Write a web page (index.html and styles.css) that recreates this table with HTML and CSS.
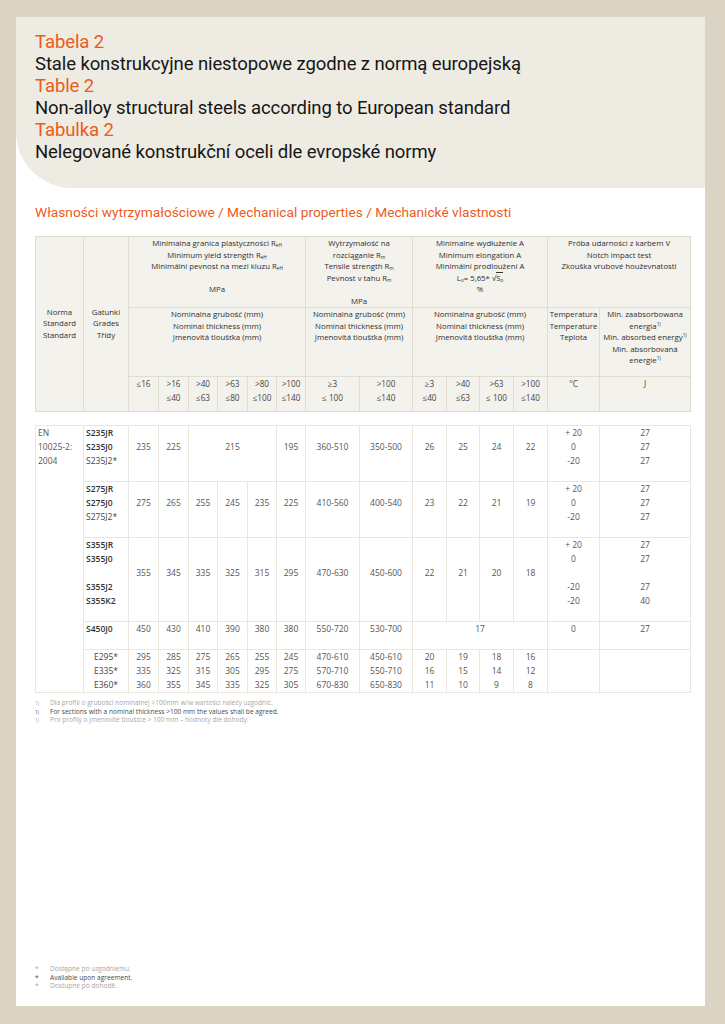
FILE: index.html
```html
<!DOCTYPE html>
<html lang="pl">
<head>
<meta charset="utf-8">
<title>Tabela 2</title>
<link rel="stylesheet" href="styles.css">
</head>
<body>
<div class="page">
  <div class="card">
    <header class="hero">
      <div class="orange">Tabela 2</div>
      <div>Stale konstrukcyjne niestopowe zgodne z normą europejską</div>
      <div class="orange">Table 2</div>
      <div>Non-alloy structural steels according to European standard</div>
      <div class="orange">Tabulka 2</div>
      <div>Nelegované konstrukční oceli dle evropské normy</div>
    </header>
    <section class="content">
      <h2 class="sect">Własności wytrzymałościowe / Mechanical properties / Mechanické vlastnosti</h2>
      <table class="thead-t">
        <colgroup>
          <col class="c48"><col class="c45"><col class="c30"><col class="c30"><col class="c29"><col class="c30"><col class="c29"><col class="c29"><col class="c54"><col class="c53"><col class="c34"><col class="c33"><col class="c34"><col class="c34"><col class="c52"><col class="c91">
        </colgroup>
        <tr class="h1">
          <td rowspan="3" class="mid">Norma<br>Standard<br>Standard</td>
          <td rowspan="3" class="mid">Gatunki<br>Grades<br>Třídy</td>
          <td colspan="6">Minimalna granica plastyczności R<sub>eH</sub><br>Minimum yield strength R<sub>eH</sub><br>Minimální pevnost na mezi kluzu R<sub>eH</sub><br><br>MPa</td>
          <td colspan="2">Wytrzymałość na<br>rozciąganie R<sub>m</sub><br>Tensile strength R<sub>m</sub><br>Pevnost v tahu R<sub>m</sub><br><br>MPa</td>
          <td colspan="4">Minimalne wydłużenie A<br>Minimum elongation A<br>Minimální prodloužení A<br>L<sub>o</sub>= 5,65* √<span class="ov">S<sub>o</sub></span><br>%</td>
          <td colspan="2">Próba udarności z karbem V<br>Notch impact test<br>Zkouška vrubové houževnatosti</td>
        </tr>
        <tr class="h2">
          <td colspan="6">Nominalna grubość (mm)<br>Nominal thickness (mm)<br>Jmenovitá tloušťka (mm)</td>
          <td colspan="2">Nominalna grubość (mm)<br>Nominal thickness (mm)<br>Jmenovitá tloušťka (mm)</td>
          <td colspan="4">Nominalna grubość (mm)<br>Nominal thickness (mm)<br>Jmenovitá tloušťka (mm)</td>
          <td>Temperatura<br>Temperature<br>Teplota</td>
          <td>Min. zaabsorbowana<br>energia<sup>1)</sup><br>Min. absorbed energy<sup>1)</sup><br>Min. absorbovaná<br>energie<sup>1)</sup></td>
        </tr>
        <tr class="h3">
          <td>≤16</td>
          <td>&gt;16<br>≤40</td>
          <td>&gt;40<br>≤63</td>
          <td>&gt;63<br>≤80</td>
          <td>&gt;80<br>≤100</td>
          <td>&gt;100<br>≤140</td>
          <td>≥3<br>≤ 100</td>
          <td>&gt;100<br>≤140</td>
          <td>≥3<br>≤40</td>
          <td>&gt;40<br>≤63</td>
          <td>&gt;63<br>≤ 100</td>
          <td>&gt;100<br>≤140</td>
          <td>°C</td>
          <td>J</td>
        </tr>
      </table>

      <table class="tbody-t">
        <colgroup>
          <col class="c48"><col class="c45"><col class="c30"><col class="c30"><col class="c29"><col class="c30"><col class="c29"><col class="c29"><col class="c54"><col class="c53"><col class="c34"><col class="c33"><col class="c34"><col class="c34"><col class="c52"><col class="c91">
        </colgroup>
        <tr class="pad">
          <td rowspan="5" class="std">EN<br>10025-2:<br>2004</td>
          <td class="grade"><b>S235JR</b><br><b>S235J0</b><br>S235J2*</td>
          <td>235</td><td>225</td><td colspan="3">215</td><td>195</td>
          <td>360-510</td><td>350-500</td>
          <td>26</td><td>25</td><td>24</td><td>22</td>
          <td>+ 20<br>0<br>-20</td>
          <td>27<br>27<br>27</td>
        </tr>
        <tr class="pad">
          <td class="grade"><b>S275JR</b><br><b>S275J0</b><br>S275J2*</td>
          <td>275</td><td>265</td><td>255</td><td>245</td><td>235</td><td>225</td>
          <td>410-560</td><td>400-540</td>
          <td>23</td><td>22</td><td>21</td><td>19</td>
          <td>+ 20<br>0<br>-20</td>
          <td>27<br>27<br>27</td>
        </tr>
        <tr class="pad">
          <td class="grade"><b>S355JR</b><br><b>S355J0</b><br><br><b>S355J2</b><br><b>S355K2</b></td>
          <td>355</td><td>345</td><td>335</td><td>325</td><td>315</td><td>295</td>
          <td>470-630</td><td>450-600</td>
          <td>22</td><td>21</td><td>20</td><td>18</td>
          <td>+ 20<br>0<br><br>-20<br>-20</td>
          <td>27<br>27<br><br>27<br>40</td>
        </tr>
        <tr class="pad">
          <td class="grade"><b>S450J0</b></td>
          <td>450</td><td>430</td><td>410</td><td>390</td><td>380</td><td>380</td>
          <td>550-720</td><td>530-700</td>
          <td colspan="4">17</td>
          <td>0</td>
          <td>27</td>
        </tr>
        <tr>
          <td class="grade egr">E295*<br>E335*<br>E360*</td>
          <td>295<br>335<br>360</td>
          <td>285<br>325<br>355</td>
          <td>275<br>315<br>345</td>
          <td>265<br>305<br>335</td>
          <td>255<br>295<br>325</td>
          <td>245<br>275<br>305</td>
          <td>470-610<br>570-710<br>670-830</td>
          <td>450-610<br>550-710<br>650-830</td>
          <td>20<br>16<br>11</td>
          <td>19<br>15<br>10</td>
          <td>18<br>14<br>9</td>
          <td>16<br>12<br>8</td>
          <td></td>
          <td></td>
        </tr>
      </table>

      <div class="notes">
        <div class="note light"><span class="mark">1)</span><span>Dla profili o grubości nominalnej &gt;100mm w/w wartości należy uzgodnić.</span></div>
        <div class="note dark"><span class="mark">1)</span><span>For sections with a nominal thickness &gt;100 mm the values shall be agreed.</span></div>
        <div class="note light"><span class="mark">1)</span><span>Pro profily o jmenovité tloušťce &gt; 100 mm – hodnoty dle dohody.</span></div>
      </div>

      <div class="notes bottom">
        <div class="note light"><span class="mark star">*</span><span>Dostępne po uzgodnieniu.</span></div>
        <div class="note dark"><span class="mark star">*</span><span>Available upon agreement.</span></div>
        <div class="note light"><span class="mark star">*</span><span>Dostupné po dohodě.</span></div>
      </div>
    </section>
  </div>
</div>
</body>
</html>
```

FILE: styles.css
```css
* { box-sizing: border-box; }
html, body { margin: 0; padding: 0; }
body {
  background: #dbd4c4;
  font-family: "Open Sans", "DejaVu Sans", sans-serif;
  color: #333;
}
.page { padding: 17px 20px 18px 16px; }
.card {
  background: #ffffff;
  height: 989px;
  display: flex;
  flex-direction: column;
}
.hero {
  background: #eeebe3;
  border-bottom-left-radius: 56px;
  padding: 14px 19px 25px;
  font-family: Roboto, "Liberation Sans", sans-serif;
  font-size: 18.5px;
  letter-spacing: -0.1px;
  line-height: 22px;
  color: #161616;
}
.orange { color: #ec5b1b; }
.content {
  flex: 1;
  display: flex;
  flex-direction: column;
  padding: 0 15px 15px 19px;
}
.sect {
  margin: 16px 0 16px;
  font-family: Roboto, "Liberation Sans", sans-serif;
  font-weight: normal;
  font-size: 13.7px;
  line-height: 16px;
  color: #ec5b1b;
}
table {
  border-collapse: collapse;
  table-layout: fixed;
  width: 655px;
}
.c48 { width: 48px; } .c45 { width: 45px; } .c30 { width: 30px; } .c29 { width: 29px; }
.c54 { width: 54px; } .c53 { width: 53px; } .c34 { width: 34px; } .c33 { width: 33px; }
.c52 { width: 52px; } .c91 { width: 91px; }

sub, sup { font-size: 0.6em; line-height: 0; }
sub { vertical-align: -0.25em; }
sup { vertical-align: 0.6em; }
.ov { border-top: 0.7px solid #333; }

.thead-t {
  background: #f4f2ec;
  font-size: 7.8px;
  line-height: 11.5px;
  color: #2e2e2e;
  text-align: center;
}
.thead-t td {
  border: 1px solid #e2ddd0;
  vertical-align: top;
  padding: 1px 1px 0;
  white-space: nowrap;
}
.thead-t td.mid { vertical-align: middle; padding-top: 0; }
.thead-t .h1 { height: 70px; }
.thead-t .h2 { height: 69px; }
.thead-t .h3 { height: 35px; }
.thead-t .h3 td { line-height: 13.5px; font-size: 8.2px; padding-top: 0; color: #444; }

.tbody-t {
  margin-top: 13px;
  font-size: 8.5px;
  line-height: 14px;
  color: #555;
  text-align: center;
}
.tbody-t td {
  border: 1px solid #ebe7dc;
  vertical-align: middle;
  padding: 0;
  white-space: nowrap;
}
.tbody-t tr.pad td { padding-bottom: 13px; }
.tbody-t td.std {
  text-align: left;
  vertical-align: top;
  padding: 0 0 0 2px;
}
.tbody-t td.grade { text-align: left; padding-left: 2px; color: #444; }
.tbody-t td.grade b { font-weight: 600; color: #333; }
.tbody-t td.egr { padding-left: 10px; }

.notes {
  margin-top: 6px;
  font-size: 6.6px;
  line-height: 8.7px;
}
.notes.bottom { margin-top: auto; }
.note { display: flex; }
.mark { width: 15px; flex: none; font-size: 4.5px; line-height: 8.7px; }
.mark.star { font-size: 6.6px; }
.note.light { color: #a7a7a7; }
.note.dark { color: #4a4a4a; }
```
